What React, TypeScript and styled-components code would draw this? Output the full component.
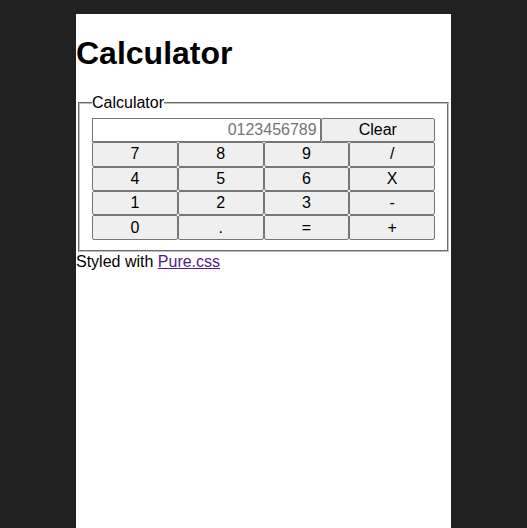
import React from "react";
import styled, { createGlobalStyle } from "styled-components";

const Global = createGlobalStyle`
  html, body { margin: 0; padding: 0; background: #212121; }
  body { font-family: "Liberation Sans", Arial, sans-serif; font-size: 16px; color: #000; }
`;

const Page = styled.div`
  width: 375px;
  margin: 14px auto 0;
  min-height: 514px;
  background: #fff;
  display: flow-root;
`;

const Title = styled.h1`
  font-size: 32px;
  font-weight: bold;
  margin: 21.44px 0;
  line-height: normal;
`;

const Fieldset = styled.fieldset`
  margin: 0 2px;
  padding: 6px 12px 10px;
  border: 2px groove rgb(192, 192, 192);
`;

const Legend = styled.legend`
  padding: 0;
  line-height: normal;
`;

const Row = styled.div<{ $cols: string }>`
  display: grid;
  grid-template-columns: ${(p) => p.$cols};
  height: 24.4px;
`;

const Display = styled.input`
  box-sizing: border-box;
  width: 100%;
  height: 100%;
  margin: 0;
  padding: 1px 3px;
  border: 1px solid #767676;
  border-radius: 0;
  background: #fff;
  text-align: right;
  font-family: "Liberation Sans", Arial, sans-serif;
  font-size: 16px;
  outline: none;
  &::placeholder { color: #757575; }
`;

const Key = styled.button`
  box-sizing: border-box;
  width: 100%;
  height: 100%;
  margin: 0;
  padding: 0 6px;
  border: 1px solid #767676;
  border-radius: 2px;
  background: #efefef;
  color: #000;
  font-family: "Liberation Sans", Arial, sans-serif;
  font-size: 16px;
  line-height: normal;
`;

const Footer = styled.div`
  line-height: normal;
  margin-top: 1px;
`;

const Link = styled.a`
  color: #551a8b;
  text-decoration: underline;
`;

const rows = [
  ["7", "8", "9", "/"],
  ["4", "5", "6", "X"],
  ["1", "2", "3", "-"],
  ["0", ".", "=", "+"],
];

export default function App() {
  return (
    <>
      <Global />
      <Page>
        <Title>Calculator</Title>
        <Fieldset>
          <Legend>Calculator</Legend>
          <Row $cols="2fr 1fr">
            <Display placeholder="0123456789" readOnly />
            <Key>Clear</Key>
          </Row>
          {rows.map((r, i) => (
            <Row key={i} $cols="repeat(4, 1fr)">
              {r.map((k) => (
                <Key key={k}>{k}</Key>
              ))}
            </Row>
          ))}
        </Fieldset>
        <Footer>
          Styled with <Link href="#">Pure.css</Link>
        </Footer>
      </Page>
    </>
  );
}
